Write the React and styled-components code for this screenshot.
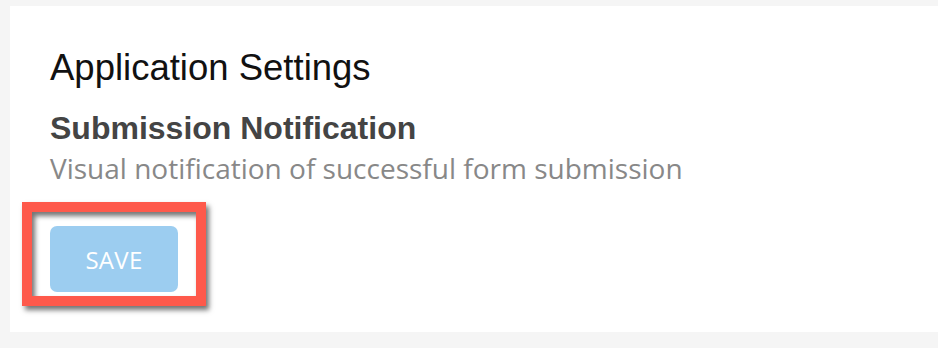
import styled, { createGlobalStyle } from "styled-components";

const GlobalStyle = createGlobalStyle`
  html, body {
    margin: 0;
    padding: 0;
    background: #f5f5f5;
  }
  body {
    font-family: "Liberation Sans", Arial, sans-serif;
  }
`;

const Page = styled.div`
  width: 938px;
  height: 348px;
  padding: 6px 0 16px 10px;
  box-sizing: border-box;
  overflow: hidden;
`;

const Card = styled.section`
  background: #ffffff;
  height: 100%;
  padding: 42px 40px 0 40px;
  box-sizing: border-box;
  display: flex;
  flex-direction: column;
  align-items: flex-start;
`;

const Title = styled.h1`
  margin: 0;
  font-family: "Liberation Sans", Arial, sans-serif;
  font-weight: 400;
  font-size: 36.5px;
  line-height: 40px;
  color: #111111;
  white-space: nowrap;
`;

const SettingName = styled.h2`
  margin: 22px 0 0 0;
  font-family: "Liberation Sans", Arial, sans-serif;
  font-weight: 700;
  font-size: 32px;
  line-height: 36px;
  color: #444444;
  white-space: nowrap;
`;

const SettingHint = styled.p`
  margin: 3px 0 0 0;
  font-family: "Open Sans", sans-serif;
  font-weight: 400;
  font-size: 28px;
  line-height: 38px;
  color: #888888;
  white-space: nowrap;
`;

const ButtonSlot = styled.div`
  position: relative;
  margin-top: 39px;
`;

const SaveButton = styled.button`
  width: 128px;
  height: 66px;
  border: none;
  border-radius: 7px;
  background: #9ccdf0;
  color: #ffffff;
  font-family: "Open Sans", sans-serif;
  font-size: 24px;
  letter-spacing: 0.3px;
  padding: 0;
  cursor: pointer;
`;

/* annotation box drawn over the button */
const Highlight = styled.div`
  position: absolute;
  left: -28px;
  top: -24px;
  width: 184px;
  height: 104px;
  box-sizing: border-box;
  border: 10px solid #fe594b;
  box-shadow: 3px 4px 5px rgba(0, 0, 0, 0.55),
    inset 3px 4px 5px rgba(0, 0, 0, 0.55);
  pointer-events: none;
`;

export default function App() {
  return (
    <>
      <GlobalStyle />
      <Page>
        <Card>
          <Title>Application Settings</Title>
          <SettingName>Submission Notification</SettingName>
          <SettingHint>Visual notification of successful form submission</SettingHint>
          <ButtonSlot>
            <SaveButton>SAVE</SaveButton>
            <Highlight />
          </ButtonSlot>
        </Card>
      </Page>
    </>
  );
}
